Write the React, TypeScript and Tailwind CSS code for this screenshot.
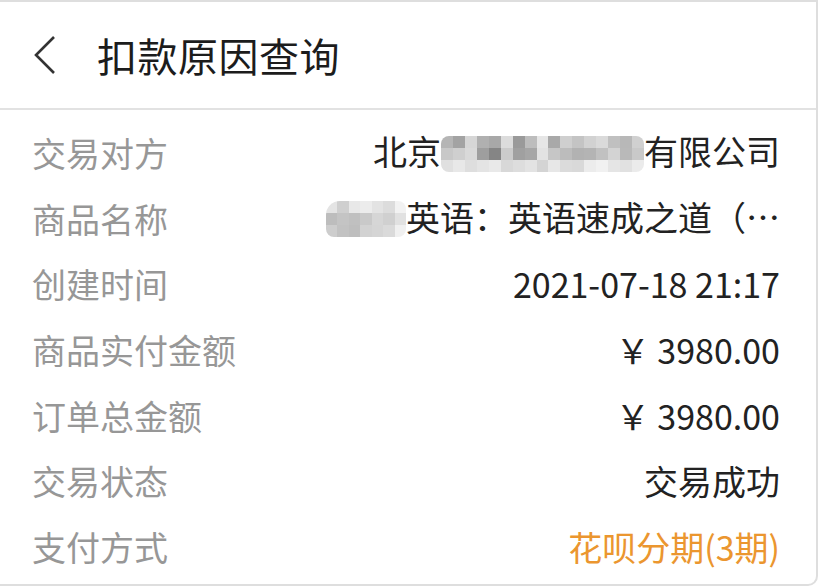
import React from 'react'

const font = "font-['Noto_Sans_CJK_SC','Noto_Sans',sans-serif]"

// pixelated blur blocks hiding part of the text
const shadesA = [
  '#b5b5b5', '#a3a3a3', '#d6d6d6', '#b0b0b0', '#a8a8a8', '#dcdcdc', '#9a9a9a', '#bdbdbd', '#e6e6e6', '#a9a9a9', '#cfcfcf', '#c4c4c4', '#d2d2d2', '#dadada', '#c0c0c0', '#b8b8b8', '#d0d0d0',
  '#c8c8c8', '#cfcfcf', '#d9d9d9', '#9e9e9e', '#858585', '#cbcbcb', '#a0a0a0', '#a6a6a6', '#e2e2e2', '#c6c6c6', '#bcbcbc', '#b2b2b2', '#b4b4b4', '#c1c1c1', '#d3d3d3', '#b9b9b9', '#c9c9c9',
  '#e0e0e0', '#e8e8e8', '#dedede', '#e4e4e4', '#e9e9e9', '#d8d8d8', '#dddddd', '#e3e3e3', '#d4d4d4', '#e7e7e7', '#dbdbdb', '#d9d9d9', '#ececec', '#f1f1f1', '#e5e5e5', '#e1e1e1', '#ebebeb',
]

const shadesB = [
  '#e4e4e4', '#cfcfcf', '#e8e8e8', '#ececec', '#e3e3e3', '#dcdcdc', '#f2f2f2',
  '#bdbdbd', '#c4c4c4', '#c0c0c0', '#c9c9c9', '#d6d6d6', '#d0d0d0', '#e1e1e1',
  '#cdcdcd', '#c2c2c2', '#bebebe', '#d2d2d2', '#d5d5d5', '#dadada', '#f0f0f0',
]

function Mosaic({ shades, cols, className }: { shades: string[]; cols: number; className: string }) {
  return (
    <span
      className={`inline-grid overflow-hidden rounded-[8px] align-middle ${className}`}
      style={{ gridTemplateColumns: `repeat(${cols}, 1fr)` }}
    >
      {shades.map((c, i) => (
        <span key={i} style={{ background: c }} />
      ))}
    </span>
  )
}

const rows: { label: string; value: React.ReactNode; tone?: string }[] = [
  {
    label: '交易对方',
    value: (
      <>
        北京
        <Mosaic shades={shadesA} cols={17} className="w-[203px] h-[36px] -mt-[4px]" />
        有限公司
      </>
    ),
  },
  {
    label: '商品名称',
    value: (
      <>
        <Mosaic shades={shadesB} cols={7} className="w-[80px] h-[36px] -mt-[4px] rounded-tl-[14px]" />
        英语：英语速成之道（…
      </>
    ),
  },
  { label: '创建时间', value: '2021-07-18 21:17' },
  { label: '商品实付金额', value: '￥ 3980.00' },
  { label: '订单总金额', value: '￥ 3980.00' },
  { label: '交易状态', value: '交易成功' },
  { label: '支付方式', value: '花呗分期(3期)', tone: 'text-[#eb962f]' },
]

export default function App() {
  return (
    <div lang="zh-CN" className={`w-[818px] h-[586px] bg-white ${font} overflow-hidden`}>
      <div className="h-full border-t-2 border-r-2 border-b-2 border-[#dedede] rounded-br-[10px] flex flex-col">
        <header className="h-[108px] shrink-0 flex items-center border-b-2 border-[#e2e2e2]">
          <svg width="26" height="40" viewBox="0 0 26 40" className="ml-[32px] mr-[39px]">
            <path d="M22 2 L4 20 L22 38" fill="none" stroke="#333" strokeWidth="2.6" />
          </svg>
          <h1 className="text-[40px] leading-none text-[#1c1c1c] tracking-[0.5px]">扣款原因查询</h1>
        </header>
        <div className="pt-[10px]">
          {rows.map((r) => (
            <div key={r.label} className="h-[65.7px] flex items-center justify-between pl-[32px] pr-[36px] text-[34px] leading-none">
              <span className="text-[#979797]">{r.label}</span>
              <span className={`whitespace-nowrap ${r.tone ?? 'text-[#222]'}`}>{r.value}</span>
            </div>
          ))}
        </div>
      </div>
    </div>
  )
}
